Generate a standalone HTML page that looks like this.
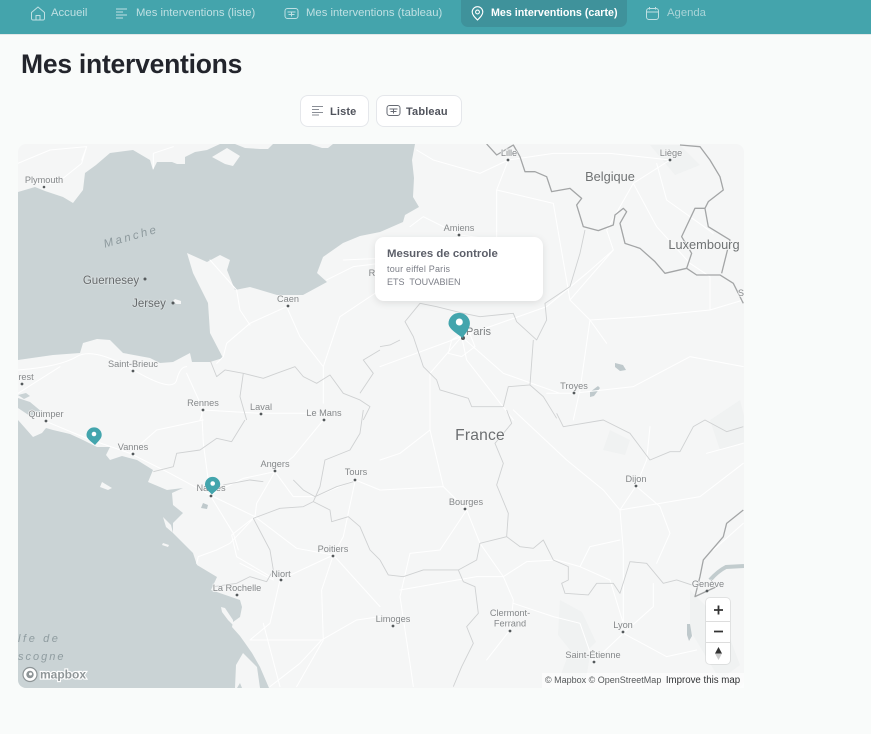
<!DOCTYPE html>
<html lang="fr"><head><meta charset="utf-8"><title>Mes interventions</title>
<style>
html,body{margin:0;padding:0;width:871px;height:734px;overflow:hidden;background:#f9fbfa;font-family:"Liberation Sans",sans-serif}
.a{position:absolute;white-space:nowrap}
#nav{left:0;top:0;width:871px;height:35px;background:#44a4ac;border-bottom:1px solid #e3e8e8;box-sizing:border-box}
#act{left:461px;top:0;width:166px;height:27px;background:#3f929b;border-radius:0 0 7px 7px}
.n{top:7px;font-size:11.3px;line-height:13px;color:#bfe0e3}
svg.i{position:absolute;fill:none}
.btn{top:95px;height:32px;background:#fff;border:1px solid #e5e7eb;border-radius:8px;box-sizing:border-box}
.bt{top:105px;font-size:11px;line-height:13px;font-weight:bold;color:#50535c;letter-spacing:.15px}
h1{position:absolute;left:21px;top:49px;margin:0;font-size:26.5px;line-height:31px;font-weight:bold;color:#23252c;letter-spacing:-.25px;white-space:nowrap}
#map{left:18px;top:144px;width:726px;height:544px;border-radius:8px;overflow:hidden;background:#f5f6f6}
#map svg{position:absolute;left:-18px;top:-144px}
text{font-family:"Liberation Sans",sans-serif;fill:#85888a;font-size:9.2px;text-anchor:middle;paint-order:stroke;stroke:#f6f7f7;stroke-width:1.5px}
text.c{font-size:12.8px;fill:#6f7273}
text.f{font-size:15.6px;fill:#6b6e70;letter-spacing:.2px}
text.w{font-size:11.5px;fill:#8f9ca0;stroke:none;font-style:italic;letter-spacing:2.6px}
.wr path{fill:none;stroke:#fff;stroke-width:3;stroke-linejoin:round;stroke-linecap:round}
.rb path{fill:none;stroke:#cfd1d2;stroke-width:2.7;stroke-linejoin:round}
.cb path{fill:none;stroke:#a3a5a6;stroke-width:3.9;stroke-linejoin:round}
.dot circle{fill:#555a5c}
#pop{left:375px;top:237px;width:168px;height:64px;background:#fff;border-radius:9px;box-shadow:0 2px 8px rgba(0,0,0,.1)}
#ctl{left:706px;top:598px;width:24px;height:66px;background:#fff;border-radius:4px;box-shadow:0 0 0 1px rgba(0,0,0,.08)}
#attr{left:542px;top:673px;width:202px;height:15px;background:rgba(255,255,255,.55);font-size:9px;line-height:14px;color:#55585a;text-indent:3px}
</style></head><body>
<div class="a" id="nav"></div>
<div class="a" id="act"></div>

<svg class="i" style="left:30px;top:6px" width="16" height="15" viewBox="0 0 16 15" stroke="#bfe0e3" stroke-width="1"><path d="M1.5 6.500L8 1l6.500 5.500V12.500a1.500 1.500 0 0 1-1.500 1.500H3a1.500 1.500 0 0 1-1.500-1.500z"/><path d="M6 14V9.500h4V14"/></svg>
<div class="a n" style="left:51px">Accueil</div>
<svg class="i" style="left:115px;top:7px" width="14" height="12" viewBox="0 0 14 12" stroke="#bfe0e3" stroke-width="1"><path d="M1 2h11M1 5h7M1 8h11M1 11h7" /></svg>
<div class="a n" style="left:136px">Mes interventions (liste)</div>
<svg class="i" style="left:284px;top:7px" width="15" height="13" viewBox="0 0 15 13" stroke="#bfe0e3" stroke-width="1"><rect x="1" y="1.500" width="13" height="10" rx="2.500"/><path d="M3.500 5h8M7.500 5v4.500M4.500 7.500h6"/></svg>
<div class="a n" style="left:306px">Mes interventions (tableau)</div>
<svg class="i" style="left:471px;top:6px" width="13" height="15" viewBox="0 0 13 15" stroke="#fff" stroke-width="1.100"><path d="M6.500 14C3.500 11 1.200 8.700 1.200 6a5.300 5.300 0 0 1 10.600 0c0 2.700-2.300 5-5.300 8z"/><circle cx="6.500" cy="6" r="1.900"/></svg>
<div class="a n" style="left:491px;color:#fff;font-weight:bold;font-size:10.7px">Mes interventions (carte)</div>
<svg class="i" style="left:645px;top:6px" width="15" height="15" viewBox="0 0 15 15" stroke="#bfe0e3" stroke-width="1"><rect x="1.500" y="2.500" width="12" height="11" rx="2.500"/><path d="M1.500 6h12M4.500 1v2.500M10.500 1v2.500"/></svg>
<div class="a n" style="left:667px;color:#a9d4d8">Agenda</div>

<h1>Mes interventions</h1>

<div class="a btn" style="left:300px;width:69px"></div>
<svg class="i" style="left:311px;top:105px" width="14" height="12" viewBox="0 0 14 12" stroke="#8a8e96" stroke-width="1"><path d="M1 1.500h11M1 4.500h7M1 7.500h11M1 10h7"/></svg>
<div class="a bt" style="left:330px;top:106px">Liste</div>
<div class="a btn" style="left:376px;width:86px"></div>
<svg class="i" style="left:386px;top:104px" width="15" height="13" viewBox="0 0 15 13" stroke="#666a73" stroke-width="1"><rect x="1" y="1.500" width="13" height="10" rx="2.500"/><path d="M3.500 5h8M7.500 5v4.500M4.500 7.500h6"/></svg>
<div class="a bt" style="left:406px;top:106px">Tableau</div>

<div class="a" id="map">
<svg width="871" height="734" viewBox="0 0 871 734" xmlns="http://www.w3.org/2000/svg">
<!-- relief patches -->
<g fill="#eceded" opacity=".45">
<path d="M560 600l22 12 14 30-18 18-20-25zM570 650l20 5-5 30-25-8z"/>
<path d="M690 590l35 35 15 40-20 15-30-50z"/>
<path d="M710 420l30-20 10 40-30 10z"/>
<path d="M610 430l20 10-5 15-22-5z"/>
<path d="M650 145l30 0 20 20-25 10z"/>
</g>
<!-- water -->
<path fill="#cad3d5" d="M18 192L35 187 45 191 63 197 73 203 83 190 85 173 96 165 110 153 133 150 150 160 153 170 157 162 172 162 177 164 185 164 185 157 195 152 207 150 220 144 235 144 245 148 260 149 268 149 273 144 310 144 322 148 328 148 333 144 415 144 412 160 414 178 413 197 419 207 405 215 403 222 380 232 360 236 343 243 323 257 317 273 327 282 303 295 277 295 250 287 235 290 227 270 230 260 220 255 207 262 187 253 193 273 208 303 210 333 223 358 210 362 192 362 190 353 173 362 160 363 150 358 123 353 110 340 97 339 83 343 80 353 53 355 18 360Z"/>
<path fill="#cad3d5" d="M18 420L33 437 42 433 46 428 53 430 70 434 83 440 97 447 110 447 106 455 110 460 122 456 137 460 153 470 148 482 167 490 183 488 172 493 173 505 183 513 173 523 173 533 193 553 197 565 217 577 211 590 240 600 242 607 240 617 233 622 232 627 240 636 245 643 252 653 260 667 269 688 18 688Z"/>
<path fill="#cad3d5" d="M18 398L30 402 42 412 30 416 18 408ZM18 395l8-2 4 3-6 3z"/>
<path fill="#f5f6f6" d="M102 482l10 6-4 2-8-3zM163 543l6 2-1 2-6-2zM163 517l8 8 2 8-7-6z"/>
<path fill="#f5f6f6" d="M212 157L227 148 240 156 233 166 225 164Z"/>
<path fill="#f5f6f6" d="M176 304l-3-3 2-2 6 2 0 3z"/>
<path fill="#f5f6f6" d="M221 607L225 608 233 620 233 625 228 620 222 612ZM243 653L257 667 260 688 242 688 240 683 237 688 235 688 236 665Z"/>
<!-- lakes -->
<g fill="#bfc9cc"><path d="M615 363l8 2 3 5-6 1-5-4zM590 392l8-6 2 2-6 8-4 1zM203 503l5 2-1 4-6-1zM687 624l3 0 2 12-3 5-2-6z"/></g>
<path d="M710 580q8-9 16-13l18-1" fill="none" stroke="#c2ccce" stroke-width="4"/>

<!-- roads -->
<g class="wr" transform="translate(10,140) scale(.3333)">
<path d="M24 690Q150 680 200 650T370 690 500 720 530 680M580 810L530 700M580 810L750 820 940 820M580 810L570 840M830 500L720 550 650 610 640 650 620 670M830 500L870 590 940 680 990 530 1110 450M600 360L680 450 690 510 720 555M24 760L150 680M230 20L215 70 140 130 70 130M24 70L120 30 230 20 215 60M430 85L430 40 490 20"/>
<path d="M940 680L940 790M1000 360L1110 355M950 420L1030 380 1110 370"/>
</g>
<g class="wr" transform="translate(10,410) scale(.3333)">
<path d="M110 35L230 85 360 130 480 190 600 255 735 320 860 415 970 435M575 0L580 100 600 250M600 255L700 205 795 185 850 260M795 185L740 280 735 320 660 400 620 420 565 440 560 460M735 320L665 375 680 440 790 505M600 255L670 370 685 420M970 435L810 510 780 640 720 690 935 690M970 435L935 540 940 690 860 830M970 435L1110 590M790 510L690 460M935 690L1040 630 1110 620M940 30L850 140 795 185M1036 210L1000 380 970 435M1036 210L1110 240M1036 210L915 260 850 260M360 130L440 60 580 30M760 640L810 830M935 690L870 760 780 830"/>
</g>
<g class="wr" transform="translate(380,140) scale(.3333)">
<path d="M385 60L350 150 350 300 240 285M350 150L520 190 570 480M385 60L300 100 160 60 110 30M240 285L130 230 90 260M385 60L520 40 690 40 870 60M870 60L760 130 680 270 700 330 570 480M700 330L620 400 500 500 245 590M245 590L0 680M245 590L150 700 150 840M245 590L370 700 540 760M245 590L260 660 400 840M580 760L500 760M580 760L760 740 930 650 1090 680M570 480L630 540 680 610M630 540L600 750 580 840M630 540L790 530 990 510 1090 480M990 510L990 410 930 370M760 130L830 260 930 370M830 70L860 180 1000 280M215 600l50-30 20 50-40 30-40-10z"/>
</g>
<g class="wr" transform="translate(380,410) scale(.3333)">
<path d="M150 0L150 60 60 130 0 150M150 60L190 230 260 300 180 420 90 430 60 560 90 760 100 830M190 230L0 240M260 300L300 400 370 500 440 455 530 450 600 470 690 510 730 640M400 0L560 150 670 240 720 300 840 280 960 260 1090 160M768 228L720 300M768 228L840 290 870 370 830 460M720 300L730 420 730 640M600 470L630 410 720 390M370 500L400 570 390 660M370 500L290 500 60 540M730 670L820 590 820 520M730 670L640 755M730 670L860 740 950 720M640 755L600 640 520 620 400 580M810 50L800 150 768 228M390 660L320 750M980 130L1090 100M1000 420L1090 340"/>
</g>
<!-- region borders -->
<g class="rb" transform="translate(10,140) scale(.3333)">
<path d="M600 660L620 710 645 690 700 700 760 715 800 700 855 680 880 710 920 730 960 705 1000 760 1050 780 1080 800 1060 840M700 700L690 770 710 840M1110 630L1060 660 1090 700 1050 760"/>
</g>
<g class="rb" transform="translate(10,410) scale(.3333)">
<path d="M1060 0L1050 70 1020 120 945 150 930 230 910 275 880 290 810 295 730 325 780 420 790 480 770 515 720 500 680 520 610 530M705 30L665 95 620 85 570 120 500 130 490 170 430 185M910 275L960 300 965 335 1015 320 1050 350 1080 420 1110 450"/>
<path d="M640 225L720 210 760 215M850 210L880 240 915 260 980 230 1030 215" stroke="#c4cdd0"/>
</g>
<g class="rb" transform="translate(380,140) scale(.3333)">
<path d="M120 490L170 500 250 520 300 530 400 520 410 545 470 600 500 540 495 490 570 440 600 340 615 270M120 490L75 545 100 590 130 680 170 720 180 750 265 775 275 800 370 800 385 740 450 735 460 600M450 735L490 770 530 835M0 620L30 615 60 600"/>
</g>
<g class="rb" transform="translate(380,410) scale(.3333)">
<path d="M380 0L395 40 345 100 370 160 350 225 385 310 380 380 300 400 290 450 235 480 130 480 70 500 25 495 0 450M235 480L250 515 285 530 295 610 260 650 280 700 245 770 220 830M380 380L420 410 460 415 490 390 520 450 565 470 565 510 545 520 555 550 625 555 650 520 700 520 720 550 750 455 800 460 850 520 890 510 935 525M530 10L550 50 670 30 750 70 810 150 870 125 900 125 940 50 975 30 1040 65 1090 50"/>
</g>
<g class="cb" transform="translate(380,140) scale(.3333)">
<path d="M320 12L350 45 400 15 420 50 435 95 465 95 500 110 515 155 570 145 605 175 590 195 610 260 655 272 700 255 705 225 730 205 740 215 720 250 735 310 780 325 825 365 855 400 920 385 950 405 1020 405 1060 430 1090 490M920 385L935 340 905 290 945 205 975 205 985 185 1030 150 1020 110 990 60 960 20 900 15M975 205L985 260 1050 300 1025 400"/>
</g>
<g class="cb" transform="translate(380,410) scale(.3333)">
<path d="M1090 300L1040 340 1030 380 970 450 960 500 945 560 1010 530"/>
</g>

<!-- labels -->
<g>
<text x="44" y="183">Plymouth</text>
<text class="w" transform="translate(132,240) rotate(-16)" style="fill:#8e9a9e">Manche</text>
<text x="111" y="284" style="font-size:11.500px;fill:#666a6c;stroke:#d9dfe0">Guernesey</text>
<text x="149" y="307" style="font-size:11.500px;fill:#666a6c;stroke:#d9dfe0">Jersey</text>
<text x="288" y="302">Caen</text>
<text x="133" y="367">Saint-Brieuc</text>
<text x="26" y="380">rest</text>
<text x="46" y="417">Quimper</text>
<text x="203" y="406">Rennes</text>
<text x="261" y="410">Laval</text>
<text x="324" y="416">Le Mans</text>
<text x="133" y="450">Vannes</text>
<text x="275" y="467">Angers</text>
<text x="356" y="475">Tours</text>
<text x="211" y="491">Nantes</text>
<text x="333" y="552">Poitiers</text>
<text x="281" y="577">Niort</text>
<text x="237" y="591">La Rochelle</text>
<text x="393" y="622">Limoges</text>
<text x="466" y="505">Bourges</text>
<text x="636" y="482">Dijon</text>
<text x="510" y="616">Clermont-</text>
<text x="510" y="626.500">Ferrand</text>
<text x="623" y="628">Lyon</text>
<text x="593" y="658">Saint-Étienne</text>
<text x="708" y="587">Genève</text>
<text x="574" y="389">Troyes</text>
<text x="459" y="231">Amiens</text>
<text x="509" y="156">Lille</text>
<text x="671" y="156">Liège</text>
<text x="372" y="276">R</text>
<text x="610" y="181" class="c">Belgique</text>
<text x="704" y="249" class="c">Luxembourg</text>
<text x="478.500" y="335" style="font-size:11px;fill:#7d8082">Paris</text>
<text x="741" y="296">S</text>
<text x="480" y="440" class="f">France</text>
<text class="w" x="18" y="642" style="text-anchor:start;font-size:11px">lfe de</text>
<text class="w" x="18" y="660" style="text-anchor:start;font-size:11px;letter-spacing:2px">scogne</text>
</g>
<g class="dot">
<circle cx="44" cy="187" r="1.300"/><circle cx="145" cy="279" r="1.500"/><circle cx="173" cy="303" r="1.500"/><circle cx="288" cy="306" r="1.400"/><circle cx="133" cy="371" r="1.400"/><circle cx="22" cy="384" r="1.400"/><circle cx="46" cy="421" r="1.400"/><circle cx="203" cy="410" r="1.400"/><circle cx="261" cy="414" r="1.400"/><circle cx="324" cy="420" r="1.400"/><circle cx="133" cy="454" r="1.400"/><circle cx="275" cy="471" r="1.400"/><circle cx="355" cy="480" r="1.400"/><circle cx="211" cy="496" r="1.400"/><circle cx="333" cy="556" r="1.400"/><circle cx="281" cy="580" r="1.400"/><circle cx="237" cy="595" r="1.400"/><circle cx="393" cy="626" r="1.400"/><circle cx="465" cy="509" r="1.400"/><circle cx="636" cy="486" r="1.400"/><circle cx="510" cy="631" r="1.400"/><circle cx="623" cy="632" r="1.400"/><circle cx="594" cy="662" r="1.400"/><circle cx="707" cy="591" r="1.400"/><circle cx="574" cy="393" r="1.400"/><circle cx="459" cy="235" r="1.400"/><circle cx="508" cy="160" r="1.400"/><circle cx="670" cy="160" r="1.400"/><circle cx="463" cy="338" r="2"/>
</g>

<!-- markers -->
<g fill="#43a5ad">
<path d="M462.500 338C458 334 448.500 329 448.500 323.500a10.700 10.700 0 0 1 21.400 0c0 5-4.500 10-7.400 14.500z"/>
<path d="M95 445C92 442 86.500 439 86.500 435a7.600 7.600 0 0 1 15.200 0c0 3.600-3.700 6.500-6.700 10z"/>
<path d="M212 494.500C209 491.500 205 488 205 484.500a7.600 7.600 0 0 1 15.200 0c0 3.600-5.200 6.500-8.200 10z"/>
</g>
<g fill="#fff"><circle cx="459.300" cy="322" r="3.500"/><circle cx="94" cy="434" r="2.300"/><circle cx="212.700" cy="483.500" r="2.300"/></g>

<!-- mapbox logo -->
<circle cx="30" cy="674.500" r="7" fill="#fff" stroke="#8d9496" stroke-width="1.200"/>
<circle cx="30" cy="674.500" r="3.700" fill="#8d9496"/>
<circle cx="30.500" cy="674" r="1.500" fill="#fff"/>
<text x="63" y="678.500" style="font-size:12px;font-weight:bold;fill:#8f9698;stroke:#fff;stroke-width:2.200px">mapbox</text>
</svg>
</div>

<div class="a" id="pop"></div>
<div class="a" style="left:387px;top:248px;font-size:11.4px;line-height:13px;font-weight:bold;color:#5c5f69">Mesures de controle</div>
<div class="a" style="left:387px;top:264px;font-size:9px;line-height:11px;color:#7b7e87;letter-spacing:.2px">tour eiffel Paris</div>
<div class="a" style="left:387px;top:277px;font-size:9px;line-height:11px;color:#7b7e87;white-space:pre">ETS  TOUVABIEN</div>

<div class="a" id="attr">© Mapbox © OpenStreetMap <span style="color:#2f3133;font-size:9.7px;margin-left:2px">Improve this map</span></div>

<div class="a" id="ctl"></div>
<div class="a" style="left:706px;top:621px;width:24px;height:1px;background:#ddd"></div>
<div class="a" style="left:706px;top:642px;width:24px;height:1px;background:#ddd"></div>
<svg class="i" style="left:706px;top:598px" width="24" height="66" viewBox="0 0 24 66">
<path d="M8 12h9M12.500 7.500v9M8 33.500h9" stroke="#333" stroke-width="1.800"/>
<path d="M12.500 49l3.500 6.500h-7z" fill="#333"/><path d="M12.500 62l3.500-6.500h-7z" fill="#ccc"/>
</svg>
</body></html>
